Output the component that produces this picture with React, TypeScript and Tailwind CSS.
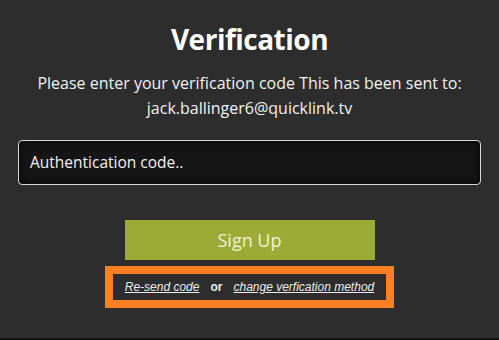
import React from "react";

export default function App() {
  return (
    <div className="w-[499px] h-[340px] bg-[#2d2d2d] flex flex-col border-b-2 border-[#151515] overflow-hidden" style={{ fontFamily: '"Open Sans", sans-serif' }}>
      <h1 className="mt-[19px] text-center text-white font-bold text-[28px] leading-[40px] tracking-[-0.5px]">Verification</h1>
      <p className="mt-[12px] text-center text-[#f2f2f2] text-[16px] leading-[25px]">
        Please enter your verification code This has been sent to:
        <br />
        jack.ballinger6@quicklink.tv
      </p>
      <div className="mx-[18px] mt-[19px] h-[45px] rounded-[4px] border border-[#d8d8d8] bg-[#151515] shadow-[inset_0_0_8px_rgba(0,0,0,0.8)] flex items-center px-[11px]">
        <span className="text-[15.5px] text-[#f2f2f2]">Authentication code..</span>
      </div>
      <div className="mt-[35px] flex justify-center">
        <button className="w-[250px] h-[40px] bg-[#9cab35] text-[#eef2d8] text-[18px] flex items-center justify-center">Sign Up</button>
      </div>
      <div className="mt-[6px] flex justify-center">
        <div className="w-[289px] h-[42px] border-[8px] border-[#fd7f23] flex items-center justify-center gap-[11px] text-[12px] text-[#ececec]" style={{ fontFamily: '"Liberation Sans", Arial, sans-serif' }}>
          <span className="italic underline">Re-send code</span>
          <span className="font-bold">or</span>
          <span className="italic underline">change verfication method</span>
        </div>
      </div>
    </div>
  );
}
